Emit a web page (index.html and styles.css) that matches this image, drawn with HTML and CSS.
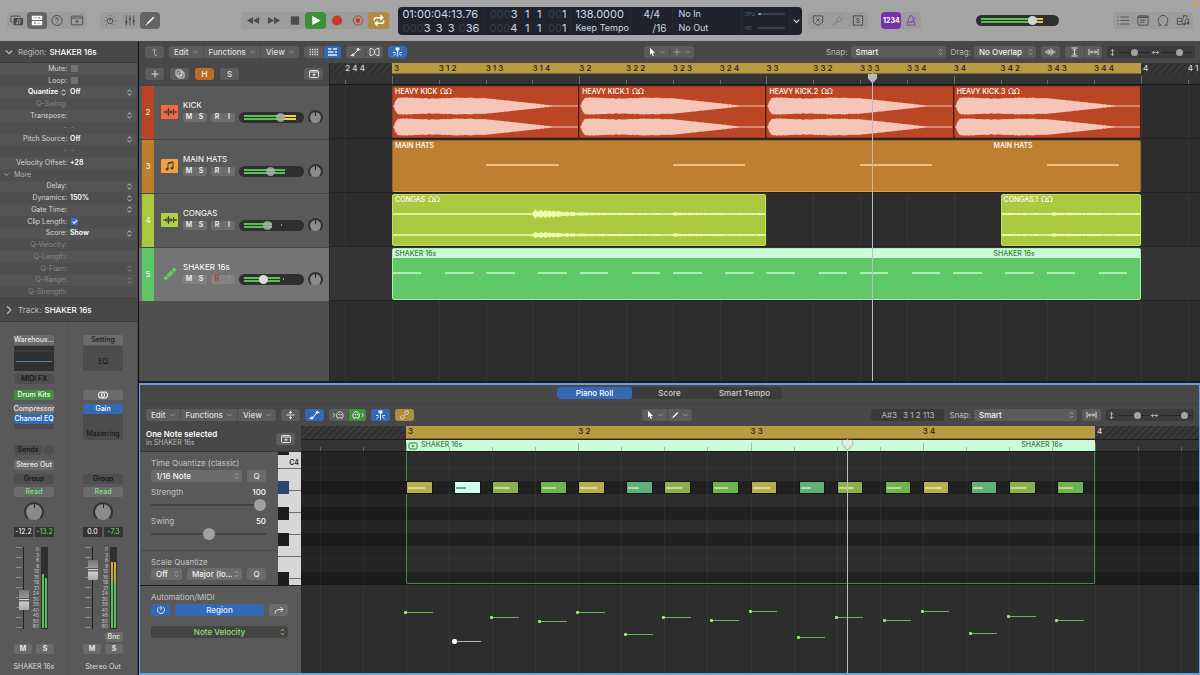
FILE: index.html
```html
<!DOCTYPE html>
<html lang="en">
<head>
    <meta charset="UTF-8">
    <meta name="viewport" content="width=device-width, initial-scale=1.0">
    <title>Logic Pro</title>
    <link rel="stylesheet" href="styles.css">
</head>
<body>
    <!-- icon set -->
    <svg class="sprite" width="0" height="0" aria-hidden="true">
        <symbol id="i-down" viewBox="0 0 8 8"><path d="M1.5 2.8 4 5.3l2.5-2.5"/></symbol>
        <symbol id="i-right" viewBox="0 0 8 8"><path d="M2.5 1 5.5 4l-3 3"/></symbol>
        <symbol id="i-updown" viewBox="0 0 8 10"><path d="M2 4l2-2.2L6 4M2 6l2 2.2L6 6"/></symbol>
        <symbol id="i-library" viewBox="0 0 16 14"><path d="M3 9H2.2A1.2 1.2 0 0 1 1 7.8V3.2A1.2 1.2 0 0 1 2.2 2h8.600A1.2 1.2 0 0 1 12 3.2"/><rect class="fill" x="4" y="4" width="11" height="8.5" rx="1.2"/><path class="cut" d="M8.5 10.300V6.500l3-.7v3.700"/><circle class="cutfill" cx="7.8" cy="10.300" r="1"/><circle class="cutfill" cx="10.800" cy="9.600" r="1"/></symbol>
        <symbol id="i-inspector" viewBox="0 0 16 14"><rect class="fill" x="2" y="1.500" width="12" height="5" rx="1"/><rect class="fill" x="2" y="7.500" width="12" height="5" rx="1"/><path class="cut" d="M4 4h4M8 10h4"/><circle class="cutfill" cx="10.500" cy="4" r="1.300"/><circle class="cutfill" cx="5.500" cy="10" r="1.300"/></symbol>
        <symbol id="i-help" viewBox="0 0 14 14"><circle cx="7" cy="7" r="5.500"/><path d="M5.500 5.800c0-2 3-2 3 0 0 1-1.500 1-1.500 2.200M7 9.200v.9"/></symbol>
        <symbol id="i-tray" viewBox="0 0 16 14"><rect x="1.500" y="2" width="13" height="10" rx="1"/><path d="M1.500 4.200h13M8 6v4M6 8h4"/></symbol>
        <symbol id="i-dial" viewBox="0 0 14 14"><circle cx="7" cy="7.500" r="3"/><path d="M7 7.500V5M1 7.500h1.200M11.800 7.500H13M2.800 3.300l.8.8M11.200 3.300l-.8.800M7 1.300v1.200M2.800 11.700l.8-.8M11.200 11.700l-.8-.8"/></symbol>
        <symbol id="i-faders" viewBox="0 0 14 14"><path d="M3 1.500v11M7 1.500v11M11 1.500v11"/><rect class="fill" x="1.800" y="7.500" width="2.400" height="2.500"/><rect class="fill" x="5.800" y="4" width="2.400" height="2.500"/><rect class="fill" x="9.800" y="6.500" width="2.400" height="2.500"/></symbol>
        <symbol id="i-pencil" viewBox="0 0 14 14"><path class="thick" d="M4 10.500 11 3.500"/><path d="M2.500 12l1.200-.8"/></symbol>
        <symbol id="i-rewind" viewBox="0 0 16 14"><path class="fill" d="M8 3v8L1 7zM15 3v8L8 7z"/></symbol>
        <symbol id="i-forward" viewBox="0 0 16 14"><path class="fill" d="M1 3v8l7-4zM8 3v8l7-4z"/></symbol>
        <symbol id="i-stop" viewBox="0 0 14 14"><rect class="fill" x="2.500" y="2.500" width="9" height="9"/></symbol>
        <symbol id="i-play" viewBox="0 0 14 14"><path class="fill" d="M3 2.200 12 7l-9 4.800z"/></symbol>
        <symbol id="i-record" viewBox="0 0 14 14"><circle class="fill" cx="7" cy="7" r="5.500"/></symbol>
        <symbol id="i-capture" viewBox="0 0 14 14"><circle cx="7" cy="7" r="5"/><circle class="fill" cx="7" cy="7" r="2.400"/></symbol>
        <symbol id="i-cycle" viewBox="0 0 14 14"><path class="thick" d="M2 7V5.500Q2 4 3.500 4H11M8.500 1.500 11 4 8.500 6.500M12 7v1.500q0 1.500-1.500 1.500H3M5.500 7.500 3 10l2.500 2.500"/></symbol>
        <symbol id="i-badge-x" viewBox="0 0 14 14"><path d="M2 2h10v7l-5 3.500L2 9zM5.300 4.800l3.400 3.400M8.700 4.800 5.300 8.200"/></symbol>
        <symbol id="i-fork" viewBox="0 0 14 14"><path d="M1.500 12.500 6 8M6 8 5.500 6 10 1.500M6 8l2 .5L12.500 4"/></symbol>
        <symbol id="i-solo" viewBox="0 0 14 14"><rect x="2" y="2" width="10" height="10"/><path d="M8.600 5.300c-.6-1-3.200-.7-3.200.5 0 1.400 3.200.9 3.200 2.400 0 1.200-2.800 1.400-3.400.3"/></symbol>
        <symbol id="i-metro" viewBox="0 0 14 14"><path d="M5.500 2h3L11.500 12h-9zM3.500 8.800h7M7 8.800l5-5.500"/></symbol>
        <symbol id="i-list" viewBox="0 0 16 14"><path d="M5 3h10M5 7h10M5 11h10M1.500 3h1.500M1.500 7h1.500M1.500 11h1.500"/></symbol>
        <symbol id="i-note" viewBox="0 0 14 14"><rect x="1.500" y="2" width="11" height="10" rx="1"/><path class="thick" d="M1.500 3.500h11"/><path d="M4 6.500h6M4 8.800h4.500"/></symbol>
        <symbol id="i-loop" viewBox="0 0 14 14"><path d="M1.500 12h3.500C-.5 8.500 2 1.500 7 1.500S14.500 8.500 9 12h3.500"/></symbol>
        <symbol id="i-media" viewBox="0 0 16 14"><path d="M1.500 4.500h5.500v7H1.500zM1.500 8h5.500M8.500 4.500V1.500h4v3"/><path d="M10.500 11V6.500l4-1V10"/><circle class="fill" cx="9.500" cy="11" r="1.400"/><circle class="fill" cx="13.500" cy="10.200" r="1.400"/></symbol>
        <symbol id="i-up" viewBox="0 0 12 10"><path d="M8.500 8.500h-1Q6 8.500 6 7V2M4 4l2-2.200L8 4"/></symbol>
        <symbol id="i-grid" viewBox="0 0 12 10"><path class="dots" d="M2 2.500h9M2 5h9M2 7.500h9"/></symbol>
        <symbol id="i-lanes" viewBox="0 0 12 10"><path class="thick" d="M1.500 2h3.500M6.500 2h4M1.500 5h5.500M8.500 5h2M1.500 8h9"/></symbol>
        <symbol id="i-auto" viewBox="0 0 12 10"><path d="M1 8.500h2.500l5-6H11"/><circle class="fill" cx="3.500" cy="8" r="1.400"/><circle class="fill" cx="8.500" cy="2.500" r="1.400"/></symbol>
        <symbol id="i-flex" viewBox="0 0 12 10"><path d="M1.500 1.500q4.500 0 4.500 3.500T1.500 8.500zM10.500 1.500Q6 1.500 6 5t4.500 3.500z"/></symbol>
        <symbol id="i-catch" viewBox="0 0 12 10"><path class="fill" d="M4 .5h4v2L6 4.500 4 2.500z"/><path d="M6 2v7.500M1.500 5.500h2.500M8 5.500h2.500M4.500 6.500 2 8.800M7.500 6.500 10 8.800"/></symbol>
        <symbol id="i-cursor" viewBox="0 0 10 10"><path class="fill" d="M3 .8v7l1.600-1.500 1.200 2.700 1.200-.5-1.200-2.600H8z"/></symbol>
        <symbol id="i-plus" viewBox="0 0 10 10"><path d="M5 1.500v7M1.500 5h7"/></symbol>
        <symbol id="i-copy" viewBox="0 0 12 10"><rect x="2" y="1" width="6" height="6" rx="1"/><rect x="4" y="3" width="6" height="6" rx="1"/><path d="M7 4.500v3M5.500 6h3"/></symbol>
        <symbol id="i-tray-up" viewBox="0 0 12 10"><rect x="1.500" y="1.500" width="9" height="7" rx="1"/><path d="M1.500 3h9M6 4.300v2.900M4.500 5.700h3"/></symbol>
        <symbol id="i-wave" viewBox="0 0 14 10"><path d="M1.500 4.500v1M3 3.500v3M4.500 2v6M6 3v4M7.500 1v8M9 2.500v5M10.500 3.500v3M12 4.500v1"/></symbol>
        <symbol id="i-track-wave" viewBox="0 0 14 10"><path d="M0 5h14M2.500 4v2M4 2.500v5M5.500 1v8M7 3v4M8.500 3.800v2.400M10.500 2v6M12 4v2"/></symbol>
        <symbol id="i-fit-v" viewBox="0 0 12 10"><path d="M3 1h6M3 9h6M6 2v6M4.500 3.500 6 2l1.500 1.500M4.500 6.500 6 8l1.500-1.500"/></symbol>
        <symbol id="i-fit-h" viewBox="0 0 12 10"><path d="M1.500 2v6M10.500 2v6M3 5h6M4.500 3.500 3 5l1.500 1.500M7.500 3.500 9 5 7.500 6.500"/></symbol>
        <symbol id="i-zoom-v" viewBox="0 0 10 10"><path d="M5 1.500v7M3 3.500l2-2 2 2M3 6.500l2 2 2-2"/></symbol>
        <symbol id="i-zoom-h" viewBox="0 0 10 10"><path d="M1.500 5h7M3.500 3l-2 2 2 2M6.500 3l2 2-2 2"/></symbol>
        <symbol id="i-collapse" viewBox="0 0 12 10"><path d="M2 5h8M6 .5V3M4.500 2 6 3.500 7.500 2M6 9.500V7M4.500 8 6 6.500 7.500 8"/></symbol>
        <symbol id="i-midi-in" viewBox="0 0 14 10"><path d="M1 3l2 2-2 2M6 8.500C3.500 5 6 1.500 8.500 1.500S13.500 5 11 8.500H9.500q0-1-1-1t-1 1z"/><path class="dots" d="M7 4.500h4"/></symbol>
        <symbol id="i-midi-out" viewBox="0 0 14 10"><path d="M11.500 3l2 2-2 2M3 8.500C.5 5 3 1.500 5.500 1.500S10.500 5 8 8.500H6.500q0-1-1-1t-1 1z"/><path class="dots" d="M4 4.500h4"/></symbol>
        <symbol id="i-link" viewBox="0 0 12 10"><path d="M5 6.500 7.500 3.500M5.500 3 7.500 1q1-.7 2 .2t.2 2L8 5M6.500 7l-2 2q-1 .7-2-.2t-.2-2L4 5"/></symbol>
        <symbol id="i-power" viewBox="0 0 12 10"><path d="M6 1v4M3.800 2.200a3.500 3.500 0 1 0 4.400 0"/></symbol>
        <symbol id="i-jump" viewBox="0 0 12 10"><path d="M2 8.500q0-4 4-4h4M7.500 2 10 4.500 7.500 7"/></symbol>
        <symbol id="i-stereo" viewBox="0 0 12 10"><circle cx="4.700" cy="5" r="2.600"/><circle cx="7.300" cy="5" r="2.600"/></symbol>
        <symbol id="i-loops" viewBox="0 0 12 8"><path d="M.5 6.500h1.700C-.2 4 1 1.500 3 1.500S6.200 4 4 6.500h4C5.800 4 7 1.500 9 1.500s3 2.500.8 5h1.700"/></symbol>
        <symbol id="i-region" viewBox="0 0 10 8"><rect x="1" y="1" width="8" height="6" rx="1"/><path class="fill" d="M4 2.500 6.500 4 4 5.500z"/></symbol>
        <symbol id="i-shaker" viewBox="0 0 16 16"><path class="tube" d="M2.500 13.500 13.500 2.500"/><path class="tube-cut" d="M4.500 9.500l2 2M9.500 4.500l2 2"/></symbol>
        <symbol id="i-notes" viewBox="0 0 14 12"><path d="M5 9V3l5-1v6"/><path class="thick" d="M5 3.300l5-1"/><circle class="fill" cx="4" cy="9" r="1.500"/><circle class="fill" cx="9" cy="8" r="1.500"/></symbol>
        <symbol id="i-playhead" viewBox="0 0 12 12"><path class="fill" d="M1 1h10v5L6 11.500 1 6z"/></symbol>
    </svg>

    <header class="control-bar">
        <div class="bar-group">
            <button aria-label="Library"><svg><use href="#i-library"/></svg></button>
            <button class="on-dark" aria-label="Inspector"><svg><use href="#i-inspector"/></svg></button>
            <button aria-label="Quick Help"><svg><use href="#i-help"/></svg></button>
            <button aria-label="Toolbar"><svg><use href="#i-tray"/></svg></button>
        </div>
        <div class="bar-group">
            <button aria-label="Smart Controls"><svg><use href="#i-dial"/></svg></button>
            <button aria-label="Mixer"><svg><use href="#i-faders"/></svg></button>
            <button class="on-dark" aria-label="Editors"><svg><use href="#i-pencil"/></svg></button>
        </div>
        <div class="space-3"></div>
        <div class="bar-group transport">
            <button aria-label="Rewind"><svg><use href="#i-rewind"/></svg></button>
            <button aria-label="Forward"><svg><use href="#i-forward"/></svg></button>
            <button aria-label="Stop"><svg><use href="#i-stop"/></svg></button>
            <button class="play" aria-label="Play"><svg><use href="#i-play"/></svg></button>
            <button class="red" aria-label="Record"><svg><use href="#i-record"/></svg></button>
            <button class="red" aria-label="Capture"><svg><use href="#i-capture"/></svg></button>
            <button class="gold" aria-label="Cycle"><svg><use href="#i-cycle"/></svg></button>
        </div>
        <div class="lcd">
            <div class="lcd-cell">
                <div class="lcd-time">01:00:04:13.76</div>
                <div class="lcd-pos"><span><i>000</i>3</span><span>3</span><span>3</span><span><i>0</i>36</span></div>
            </div>
            <div class="lcd-cell">
                <div class="lcd-pos"><span><i>000</i>3</span><span>1</span><span>1</span><span><i>00</i>1</span></div>
                <div class="lcd-pos"><span><i>000</i>4</span><span>1</span><span>1</span><span><i>00</i>1</span></div>
            </div>
            <div class="lcd-cell tempo">
                <div>138.0000</div>
                <div class="small">Keep Tempo</div>
            </div>
            <div class="lcd-cell sig">
                <div>4/4</div>
                <div class="division">/16</div>
            </div>
            <div class="lcd-cell io">
                <div class="small">No In</div>
                <div class="small">No Out</div>
            </div>
            <div class="lcd-cell load">
                <div>CPU <span class="load-bar"><b></b></span></div>
                <div>HD <span class="load-bar"></span></div>
            </div>
            <button class="lcd-menu" aria-label="Display mode"><svg><use href="#i-down"/></svg></button>
        </div>
        <div class="bar-group after-lcd">
            <button aria-label="Replace"><svg><use href="#i-badge-x"/></svg></button>
            <button class="faded" aria-label="Tuner"><svg><use href="#i-fork"/></svg></button>
            <button aria-label="Solo"><svg><use href="#i-solo"/></svg></button>
        </div>
        <div class="bar-group count">
            <button class="purple">1234</button>
            <button class="metro" aria-label="Metronome"><svg><use href="#i-metro"/></svg></button>
        </div>
        <div class="space-2"></div>
        <div class="volume master">
            <span class="level" style="width: 85%"></span>
            <input type="range" aria-label="Master volume" value="70">
        </div>
        <div class="space-2"></div>
        <div class="bar-group">
            <button aria-label="List editors"><svg><use href="#i-list"/></svg></button>
            <button aria-label="Note pad"><svg><use href="#i-note"/></svg></button>
            <button aria-label="Loop browser"><svg><use href="#i-loop"/></svg></button>
            <button aria-label="Browsers"><svg><use href="#i-media"/></svg></button>
        </div>
        <span class="mic-dot"></span>
    </header>

    <div class="workspace">
        <aside class="inspector">
            <h2><svg><use href="#i-down"/></svg>Region: <b>SHAKER 16s</b></h2>
            <div class="params">
                <div class="param"><label for="p-mute">Mute:</label><input type="checkbox" id="p-mute"></div>
                <div class="param"><label for="p-loop">Loop:</label><input type="checkbox" id="p-loop"></div>
                <div class="param strong"><label for="p-quant">Quantize <svg><use href="#i-updown"/></svg></label><select id="p-quant"><option>Off</option></select><svg><use href="#i-updown"/></svg></div>
                <div class="param off"><label for="p-swing">Q-Swing:</label><select id="p-swing" disabled></select></div>
                <div class="param"><label for="p-trans">Transpose:</label><select id="p-trans"></select><svg><use href="#i-updown"/></svg></div>
                <div class="param off dashes"><span>-</span><span>-</span></div>
                <div class="param"><label for="p-pitch">Pitch Source:</label><select id="p-pitch"><option>Off</option></select><svg><use href="#i-updown"/></svg></div>
                <div class="param off dashes"><span>-</span><span>-</span></div>
                <div class="param"><label for="p-vel">Velocity Offset:</label><input type="text" id="p-vel" value="+28"></div>
                <div class="param more"><svg><use href="#i-down"/></svg>More</div>
                <div class="param"><label for="p-delay">Delay:</label><select id="p-delay"></select><svg><use href="#i-updown"/></svg></div>
                <div class="param"><label for="p-dyn">Dynamics:</label><select id="p-dyn"><option>150%</option></select><svg><use href="#i-updown"/></svg></div>
                <div class="param"><label for="p-gate">Gate Time:</label><select id="p-gate"></select><svg><use href="#i-updown"/></svg></div>
                <div class="param"><label for="p-clip">Clip Length:</label><input type="checkbox" id="p-clip" checked></div>
                <div class="param"><label for="p-score">Score:</label><select id="p-score"><option>Show</option></select><svg><use href="#i-updown"/></svg></div>
                <div class="param off"><label for="p-qvel">Q-Velocity:</label><select id="p-qvel" disabled></select></div>
                <div class="param off"><label for="p-qlen">Q-Length:</label><select id="p-qlen" disabled></select></div>
                <div class="param off"><label for="p-qflam">Q-Flam:</label><select id="p-qflam" disabled></select><svg><use href="#i-updown"/></svg></div>
                <div class="param off"><label for="p-qrange">Q-Range:</label><select id="p-qrange" disabled></select><svg><use href="#i-updown"/></svg></div>
                <div class="param off"><label for="p-qstr">Q-Strength:</label><select id="p-qstr" disabled></select></div>
            </div>
            <h2 class="track-title"><svg><use href="#i-right"/></svg>Track: <b>SHAKER 16s</b></h2>

            <div class="strips">
                <section class="strip">
                    <button class="s-setting">Warehous...</button>
                    <div class="s-eq has-curve"><svg viewBox="0 0 40 25" preserveAspectRatio="none"><path d="M0 5h40" class="eq-bar"/><path d="M2 15.500h36" class="eq-line"/></svg></div>
                    <button class="s-midi flat">MIDI FX</button>
                    <button class="s-inst green">Drum Kits</button>
                    <div class="s-inserts short">
                        <button>Compressor</button>
                        <button class="blue">Channel EQ</button>
                    </div>
                    <div class="s-sends"><button class="flat">Sends</button><span class="send-knob"></span></div>
                    <button class="s-out">Stereo Out</button>
                    <button class="s-group flat">Group</button>
                    <button class="s-read">Read</button>
                    <div class="s-pan knob"></div>
                    <div class="s-values"><span>-12.2</span><span class="peak">-13.2</span></div>
                    <div class="s-fader">
                        <div class="ticks"></div>
                        <input type="range" class="fader" aria-label="Volume SHAKER 16s" value="31">
                        <div class="scale"></div>
                        <div class="meter"><span style="height: 67%"></span><span style="height: 63%"></span></div>
                    </div>
                    <div class="s-ms"><button>M</button><button>S</button></div>
                    <div class="s-name">SHAKER 16s</div>
                </section>
                <section class="strip">
                    <button class="s-setting dark-text">Setting</button>
                    <div class="s-eq">EQ</div>
                    <button class="s-inst" aria-label="Stereo"><svg><use href="#i-stereo"/></svg></button>
                    <div class="s-inserts">
                        <button class="blue">Gain</button>
                        <span>Mastering</span>
                    </div>
                    <button class="s-group flat">Group</button>
                    <button class="s-read">Read</button>
                    <div class="s-pan knob"></div>
                    <div class="s-values"><span>0.0</span><span class="peak">-7.3</span></div>
                    <div class="s-fader">
                        <div class="ticks"></div>
                        <input type="range" class="fader" aria-label="Volume Stereo Out" value="79">
                        <div class="scale"></div>
                        <div class="meter hot"><span style="height: 83%"></span><span style="height: 83%"></span></div>
                    </div>
                    <button class="s-bnc">Bnc</button>
                    <div class="s-ms"><button>M</button><button>S</button></div>
                    <div class="s-name">Stereo Out</div>
                </section>
            </div>
        </aside>

        <main class="stage">
            <section class="arrange">
                <div class="toolbar">
                    <div class="seg"><button class="icon faded" aria-label="Up"><svg><use href="#i-up"/></svg></button></div>
                    <div class="seg menus"><button>Edit<svg><use href="#i-down"/></svg></button><button>Functions<svg><use href="#i-down"/></svg></button><button>View<svg><use href="#i-down"/></svg></button></div>
                    <div class="seg"><button class="icon" aria-label="Grid"><svg><use href="#i-grid"/></svg></button><button class="icon blue" aria-label="Lanes"><svg><use href="#i-lanes"/></svg></button></div>
                    <div class="seg"><button class="icon" aria-label="Automation"><svg><use href="#i-auto"/></svg></button><button class="icon" aria-label="Flex"><svg><use href="#i-flex"/></svg></button></div>
                    <div class="seg"><button class="icon blue" aria-label="Catch"><svg><use href="#i-catch"/></svg></button></div>
                    <div class="space-13"></div>
                    <div class="seg tools"><button aria-label="Pointer tool"><svg class="white"><use href="#i-cursor"/></svg><svg><use href="#i-down"/></svg></button><button aria-label="Marquee tool"><svg><use href="#i-plus"/></svg><svg><use href="#i-down"/></svg></button></div>
                    <div class="space-7"></div>
                    <label for="snap-a">Snap:</label>
                    <div class="pick snap"><select id="snap-a"><option>Smart</option></select><svg><use href="#i-updown"/></svg></div>
                    <label for="drag-a">Drag:</label>
                    <div class="pick drag"><select id="drag-a"><option>No Overlap</option></select><svg><use href="#i-updown"/></svg></div>
                    <div class="seg"><button class="icon" aria-label="Waveform zoom"><svg><use href="#i-wave"/></svg></button></div>
                    <div class="seg"><button class="icon" aria-label="Fit height"><svg><use href="#i-fit-v"/></svg></button><button class="icon" aria-label="Fit width"><svg><use href="#i-fit-h"/></svg></button></div>
                    <div class="zooms">
                        <svg><use href="#i-zoom-v"/></svg><input type="range" aria-label="Vertical zoom" value="50">
                        <svg><use href="#i-zoom-h"/></svg><input type="range" aria-label="Horizontal zoom" value="60">
                    </div>
                </div>

                <div class="tracks-area">
                    <div class="track-headers">
                        <div class="header-tools">
                            <button class="mini" aria-label="New track"><svg><use href="#i-plus"/></svg></button>
                            <button class="mini" aria-label="Duplicate track"><svg><use href="#i-copy"/></svg></button>
                            <button class="mini orange">H</button>
                            <button class="mini">S</button>
                            <button class="mini last" aria-label="Track header settings"><svg><use href="#i-tray-up"/></svg></button>
                        </div>
                        <div class="track red-track">
                            <div class="number">2</div>
                            <div class="track-icon"><svg><use href="#i-track-wave"/></svg></div>
                            <div class="track-body">
                                <div class="track-name">KICK</div>
                                <div class="track-row">
                                    <div class="pair"><button>M</button><button>S</button></div>
                                    <div class="pair"><button>R</button><button>I</button></div>
                                    <div class="volume warm"><span class="level" style="width: 94%"></span><input type="range" aria-label="Volume KICK" value="66"></div>
                                    <div class="knob small-knob"></div>
                                </div>
                            </div>
                        </div>
                        <div class="track orange-track">
                            <div class="number">3</div>
                            <div class="track-icon"><svg><use href="#i-notes"/></svg></div>
                            <div class="track-body">
                                <div class="track-name">MAIN HATS</div>
                                <div class="track-row">
                                    <div class="pair"><button>M</button><button>S</button></div>
                                    <div class="pair"><button>R</button><button>I</button></div>
                                    <div class="volume"><span class="level" style="width: 74%"></span><input type="range" aria-label="Volume MAIN HATS" value="48"></div>
                                    <div class="knob small-knob"></div>
                                </div>
                            </div>
                        </div>
                        <div class="track lime-track">
                            <div class="number">4</div>
                            <div class="track-icon"><svg><use href="#i-track-wave"/></svg></div>
                            <div class="track-body">
                                <div class="track-name">CONGAS</div>
                                <div class="track-row">
                                    <div class="pair"><button>M</button><button>S</button></div>
                                    <div class="pair"><button>R</button><button>I</button></div>
                                    <div class="volume"><span class="level" style="width: 50%"></span><span class="hold" style="left: 64%"></span><input type="range" aria-label="Volume CONGAS" value="42"></div>
                                    <div class="knob small-knob"></div>
                                </div>
                            </div>
                        </div>
                        <div class="track green-track selected">
                            <div class="number">5</div>
                            <div class="track-icon plain"><svg><use href="#i-shaker"/></svg></div>
                            <div class="track-body">
                                <div class="track-name">SHAKER 16s</div>
                                <div class="track-row">
                                    <div class="pair"><button>M</button><button>S</button></div>
                                    <div class="pair"><button class="rec">R</button><button class="inp">I</button></div>
                                    <div class="volume"><span class="level" style="width: 66%"></span><span class="hold" style="left: 67%"></span><input type="range" aria-label="Volume SHAKER 16s" value="35"></div>
                                    <div class="knob small-knob"></div>
                                </div>
                            </div>
                        </div>
                    </div>

                    <div class="timeline" id="timeline">
                        <div class="ruler">
                            <div class="cycle"></div>
                        </div>
                        <div class="tick-row"></div>
                        <div class="lane">
                            <div class="region kick" style="--at: 0; --len: 4"><span>HEAVY KICK <svg><use href="#i-loops"/></svg></span></div>
                            <div class="region kick" style="--at: 4; --len: 4"><span>HEAVY KICK.1 <svg><use href="#i-loops"/></svg></span></div>
                            <div class="region kick" style="--at: 8; --len: 4"><span>HEAVY KICK.2 <svg><use href="#i-loops"/></svg></span></div>
                            <div class="region kick" style="--at: 12; --len: 4"><span>HEAVY KICK.3 <svg><use href="#i-loops"/></svg></span></div>
                        </div>
                        <div class="lane">
                            <div class="region hats" style="--at: 0; --len: 16"><span>MAIN HATS</span><span class="repeat">MAIN HATS</span></div>
                        </div>
                        <div class="lane">
                            <div class="region congas" data-from="0" data-to="8" style="--at: 0; --len: 8"><span>CONGAS <svg><use href="#i-loops"/></svg></span></div>
                            <div class="region congas" data-from="4" data-to="7" style="--at: 13; --len: 3"><span>CONGAS.1 <svg><use href="#i-loops"/></svg></span></div>
                        </div>
                        <div class="lane current">
                            <div class="region shaker" style="--at: 0; --len: 16"><span>SHAKER 16s</span><span class="repeat">SHAKER 16s</span></div>
                        </div>
                        <div class="playhead"><svg><use href="#i-playhead"/></svg></div>
                    </div>
                </div>
            </section>

            <section class="editor">
                <div class="tabs">
                    <div class="tab-set"><button class="active">Piano Roll</button><button>Score</button><button>Smart Tempo</button></div>
                </div>
                <div class="toolbar">
                    <div class="seg menus"><button>Edit<svg><use href="#i-down"/></svg></button><button>Functions<svg><use href="#i-down"/></svg></button><button>View<svg><use href="#i-down"/></svg></button></div>
                    <div class="seg"><button class="icon" aria-label="Collapse"><svg><use href="#i-collapse"/></svg></button></div>
                    <div class="seg"><button class="icon blue" aria-label="Automation"><svg><use href="#i-auto"/></svg></button></div>
                    <div class="seg"><button class="icon" aria-label="MIDI In"><svg><use href="#i-midi-in"/></svg></button><button class="icon green" aria-label="MIDI Out"><svg><use href="#i-midi-out"/></svg></button></div>
                    <div class="seg"><button class="icon blue" aria-label="Catch"><svg><use href="#i-catch"/></svg></button></div>
                    <div class="seg"><button class="icon gold" aria-label="Link"><svg><use href="#i-link"/></svg></button></div>
                    <div class="space-9"></div>
                    <div class="seg tools"><button aria-label="Pointer tool"><svg class="white"><use href="#i-cursor"/></svg><svg><use href="#i-down"/></svg></button><button aria-label="Pencil tool"><svg class="white"><use href="#i-pencil"/></svg><svg><use href="#i-down"/></svg></button></div>
                    <div class="space-7"></div>
                    <div class="info-box"><span>A#3</span><span>3 1 2 113</span></div>
                    <label for="snap-b">Snap:</label>
                    <div class="pick snap-wide"><select id="snap-b"><option>Smart</option></select><svg><use href="#i-updown"/></svg></div>
                    <div class="seg"><button class="icon" aria-label="Fit width"><svg><use href="#i-fit-h"/></svg></button></div>
                    <div class="zooms">
                        <svg><use href="#i-zoom-v"/></svg><input type="range" aria-label="Vertical zoom" value="70">
                        <svg><use href="#i-zoom-h"/></svg><input type="range" aria-label="Horizontal zoom" value="86">
                    </div>
                </div>

                <div class="editor-body">
                    <div class="editor-side">
                        <div class="selection">
                            <div><b>One Note selected</b><small>in SHAKER 16s</small></div>
                            <button class="mini" aria-label="Editor settings"><svg><use href="#i-tray-up"/></svg></button>
                        </div>
                        <div class="side-keys">
                            <div class="quantize">
                                <div class="q-block">
                                    <label for="tq">Time Quantize (classic)</label>
                                    <div class="q-row"><div class="pick grow"><select id="tq"><option>1/16 Note</option></select><svg><use href="#i-updown"/></svg></div><button class="mini">Q</button></div>
                                    <div class="q-label"><label for="strength">Strength</label><output>100</output></div>
                                    <input type="range" class="flat-range" id="strength" value="100">
                                    <div class="q-label"><label for="swing">Swing</label><output>50</output></div>
                                    <input type="range" class="flat-range" id="swing" value="50">
                                </div>
                                <div class="q-block scale-q">
                                    <label for="sq-scale">Scale Quantize</label>
                                    <div class="q-row"><div class="pick root"><select aria-label="Root"><option>Off</option></select><svg><use href="#i-updown"/></svg></div><div class="pick grow"><select id="sq-scale"><option>Major (lo...</option></select><svg><use href="#i-updown"/></svg></div><button class="mini">Q</button></div>
                                </div>
                            </div>
                            <div class="keys">
                                <div class="white-key top">C4</div>
                                <div class="white-key"></div>
                                <div class="white-key"></div>
                                <div class="white-key"></div>
                                <div class="white-key"></div>
                                <div class="white-key"></div>
                                <div class="white-key last"></div>
                                <div class="black-keys"></div>
                            </div>
                        </div>
                        <div class="automation">
                            <div>Automation/MIDI</div>
                            <div class="q-row"><button class="mini blue" aria-label="Automation on"><svg><use href="#i-power"/></svg></button><button class="mini blue grow">Region</button><button class="mini" aria-label="Jump"><svg><use href="#i-jump"/></svg></button></div>
                            <div class="pick velocity-pick"><select aria-label="Lane"><option>Note Velocity</option></select><svg><use href="#i-updown"/></svg></div>
                        </div>
                    </div>
                    <div class="roll" id="roll">
                        <div class="ruler">
                            <div class="cycle"></div>
                        </div>
                        <div class="tick-row">
                            <div class="roll-region"><svg><use href="#i-region"/></svg><span>SHAKER 16s</span><span class="repeat">SHAKER 16s</span></div>
                        </div>
                        <div class="note-grid"><div class="bounds"></div></div>
                        <div class="velocity-lane"></div>
                        <div class="playhead"><svg><use href="#i-playhead"/></svg></div>
                    </div>
                </div>
            </section>
        </main>
    </div>

    <script src="script.js"></script>
</body>
</html>
```

FILE: styles.css
```css
* {
    margin: 0;
    padding: 0;
    box-sizing: border-box;
}

body {
    height: 100vh;
    display: flex;
    flex-direction: column;
    overflow: hidden;
    background: #1b1b1b;
    color: #dedede;
    font-family: Inter, "Liberation Sans", sans-serif;
    font-size: 8px;
    line-height: 10px;
}

button,
select,
input,
output {
    font: inherit;
    color: inherit;
    border: none;
    background: none;
    outline: none;
}

button {
    display: flex;
    align-items: center;
    justify-content: center;
    white-space: nowrap;
}

select {
    appearance: none;
}

svg {
    width: 14px;
    height: 12px;
    fill: none;
    stroke: currentColor;
    stroke-width: 1;
    flex: none;
}

.sprite {
    position: absolute;
}

.fill {
    fill: currentColor;
    stroke: none;
}

.cut {
    stroke: #a2a2a2;
}

.cutfill {
    fill: #a2a2a2;
    stroke: none;
}

.thick {
    stroke-width: 1.6;
}

.dots {
    stroke-width: 1.4;
    stroke-dasharray: 1.4 1;
}

.tube {
    stroke: #55d364;
    stroke-width: 3.5;
}

.tube-cut {
    stroke: #747474;
}

input[type="range"] {
    appearance: none;
    display: block;
    width: 100%;
    height: 12px;
}

.white {
    color: #fff;
}

.grow {
    flex: 1;
}

.space-2 { flex: 2; }
.space-3 { flex: 3; }
.space-7 { flex: 7; }
.space-9 { flex: 9; }
.space-13 { flex: 13; }

/* control bar */
.control-bar {
    position: relative;
    display: flex;
    align-items: center;
    height: 41px;
    padding: 0 7px;
    background: #a5a5a5;
    color: #4c4c4c;
    flex: none;
}

.bar-group {
    display: flex;
    height: 17px;
    border-radius: 4px;
    background: #9c9c9c;
}

.bar-group + .bar-group {
    margin-left: 13px;
}

.bar-group button {
    width: 20px;
    height: 17px;
    border-radius: 4px;
}

.bar-group svg {
    width: 14px;
    height: 13px;
}

.transport {
    padding: 0 1px;
}

.transport button {
    width: 21px;
}

.on-dark {
    background: #646464;
    color: #fff;
}

.on-dark .cut {
    stroke: #646464;
}

.bar-group .play {
    background: #3f8f3a;
    color: #fff;
}

.red {
    color: #c63a30;
}

.gold {
    background: #b08c3d;
    color: #fff;
}

.faded {
    opacity: 0.5;
}

.bar-group.after-lcd {
    margin-left: 6px;
}

.bar-group .purple {
    background: #7333a8;
    color: #fff;
    font-weight: 700;
    font-size: 7px;
}

.metro {
    color: #7f45b0;
}

.mic-dot {
    position: absolute;
    top: 3px;
    right: 3px;
    width: 4px;
    height: 4px;
    border-radius: 50%;
    background: #e39a36;
}

.lcd {
    display: flex;
    height: 28px;
    margin-left: 8px;
    padding-left: 3px;
    border-radius: 4px;
    background: #20232d;
    color: #cfd8e6;
    font-size: 11px;
    line-height: 14px;
}

.lcd-cell {
    width: 86px;
    padding-left: 4px;
    border-right: 1px solid #282b35;
    white-space: nowrap;
}

.lcd-cell:first-child {
    width: 84px;
    padding-left: 1px;
}

.lcd-pos {
    display: grid;
    grid-template-columns: 28px 12px 12px 25px;
    text-align: right;
}

.lcd-pos i {
    color: #393d48;
    font-style: normal;
}

.lcd-cell .small {
    font-size: 9px;
}

.lcd-cell.tempo {
    width: 60px;
}

.lcd-cell.sig {
    width: 42px;
    padding: 0 6px 0 12px;
    font-size: 10px;
}

.division {
    text-align: right;
}

.lcd-cell.io {
    width: 69px;
    padding-left: 5px;
}

.lcd-cell.load {
    width: 48px;
    padding: 0 4px 0 2px;
    color: #5c6270;
    font-size: 5px;
}

.load > div {
    display: flex;
    align-items: center;
    justify-content: space-between;
    height: 14px;
}

.load-bar {
    width: 27px;
    height: 2px;
    background: #3b404c;
}

.load-bar b {
    display: block;
    width: 3px;
    height: 2px;
    background: #7f93ad;
}

.lcd-menu {
    width: 12px;
}

.lcd-menu svg {
    width: 9px;
}

/* volume sliders with level meters */
.volume {
    position: relative;
    width: 65px;
    height: 11px;
    padding: 0 5px;
    border-radius: 6px;
    background: #2f2f2f;
}

.volume.master {
    width: 83px;
}

.level {
    display: block;
    height: 11px;
    background: linear-gradient(#0000 3px, #58c055 3px 5px, #0000 5px 6px, #58c055 6px 8px, #0000 8px);
}

.warm .level,
.master .level {
    background: linear-gradient(#2f2f2f 3px, #0000 3px 5px, #2f2f2f 5px 6px, #0000 6px 8px, #2f2f2f 8px), linear-gradient(90deg, #58c055 72%, #e8d84a 78%);
}

.master .level {
    background: linear-gradient(#2f2f2f 3px, #0000 3px 5px, #2f2f2f 5px 6px, #0000 6px 8px, #2f2f2f 8px), linear-gradient(90deg, #58c055 85%, #e0c54a 90%);
}

.hold {
    position: absolute;
    top: 4px;
    width: 1px;
    height: 2px;
    background: #58c055;
}

.volume input {
    position: absolute;
    inset: 0;
    height: 11px;
}

.volume input::-webkit-slider-thumb {
    appearance: none;
    width: 9px;
    height: 9px;
    border-radius: 50%;
    background: #b0b0b0cc;
}

.volume.master input::-webkit-slider-thumb {
    background: #d4d4d4;
}

/* inspector */
.workspace {
    flex: 1;
    display: flex;
    min-height: 0;
}

.inspector {
    width: 138px;
    flex: none;
    display: flex;
    flex-direction: column;
    background: #545454;
    border-right: 1px solid #484848;
}

.inspector h2 {
    display: flex;
    align-items: center;
    gap: 3px;
    height: 22px;
    padding-left: 4px;
    background: #484848;
    border-bottom: 1px solid #3a3a3a;
    color: #b9b9b9;
    font-size: 8px;
    font-weight: 400;
}

.inspector h2 svg {
    width: 10px;
    height: 10px;
    margin-right: 1px;
}

.inspector h2 b {
    color: #fff;
    font-weight: 500;
}

.inspector .track-title {
    height: 24px;
    border-top: 1px solid #3f3f3f;
}

.params {
    display: grid;
    grid-auto-rows: 1fr;
    height: 235px;
    font-size: 7px;
}

.param {
    display: grid;
    grid-template-columns: 67px 1fr 8px;
    align-items: center;
    padding-right: 3px;
    color: #d4d4d4;
}

.param:nth-child(even) {
    background: #4f4f4f;
}

.param label {
    text-align: right;
}

.param svg {
    width: 7px;
    height: 9px;
    vertical-align: middle;
}

.param select,
.param input[type="text"] {
    min-width: 0;
    width: 100%;
    padding-left: 3px;
    color: #fff;
    font-weight: 600;
    line-height: 10px;
}

.param.strong label {
    color: #fff;
    font-weight: 600;
}

.param.off {
    color: #868686;
}

.param input[type="checkbox"] {
    appearance: none;
    width: 7px;
    height: 7px;
    margin-left: 4px;
    border-radius: 1px;
    background: #737373;
}

.param input[type="checkbox"]:checked {
    background: #2f6fd0;
    color: #fff;
}

.param input[type="checkbox"]:checked::after {
    content: "✓";
    display: block;
    font-size: 7px;
    font-weight: 700;
    line-height: 7px;
    text-align: center;
}

.param.dashes {
    grid-template-columns: 67px 1fr;
}

.dashes span:first-child {
    text-align: right;
}

.dashes span:last-child {
    padding-left: 4px;
}

.param.more {
    display: flex;
    gap: 4px;
    padding-left: 3px;
    color: #b5b5b5;
}

/* channel strips */
.strips {
    flex: 1;
    display: flex;
    background: #595959;
}

.strip {
    flex: 1;
    display: grid;
    grid-template-columns: 40px;
    grid-template-rows: 11px 28px 16px 14px 41px 15px 14px 13px 15px 25px 20px 85px 12px 14px 14px;
    justify-content: center;
    align-items: start;
    padding-top: 13px;
    font-size: 7px;
    text-align: center;
    white-space: nowrap;
}

.strip + .strip {
    border-left: 1px solid #505050;
}

.strip button {
    width: 100%;
    height: 10px;
    border-radius: 2px;
    background: #6b6b6b;
    color: #e8e8e8;
    font-weight: 500;
}

.strip .flat {
    background: #4f4f4f;
    color: #111;
}

.strip .dark-text {
    color: #1c1c1c;
}

.strip .green,
.seg .green {
    background: #3f8f3f;
    color: #fff;
}

.strip .blue {
    background: #3568b5;
    color: #fff;
}

.strip .s-setting { grid-row: 1; }

.s-eq {
    grid-row: 2;
    height: 25px;
    background: #4c4c4c;
    color: #111;
    line-height: 32px;
}

.s-eq.has-curve {
    background: #303030;
}

.s-eq svg {
    display: block;
    width: 100%;
    height: 100%;
}

.eq-bar {
    stroke: #484848;
}

.eq-line {
    stroke: #5b80b8;
}

.strip .s-midi { grid-row: 3; }
.strip .s-inst { grid-row: 4; }

.s-inserts {
    grid-row: 5;
    height: 36px;
    border-radius: 2px;
    background: #4c4c4c;
    color: #111;
}

.s-inserts.short {
    height: 25px;
}

.s-inserts span {
    display: block;
    padding-top: 15px;
}

.s-sends {
    grid-row: 6;
    display: flex;
    gap: 2px;
}

.send-knob {
    flex: none;
    width: 10px;
    height: 10px;
    border-radius: 50%;
    background: #4f4f4f;
}

.strip .s-out { grid-row: 7; }
.strip .s-group { grid-row: 8; }

.strip .s-read {
    grid-row: 9;
    color: #7be07d;
}

.knob {
    width: 20px;
    height: 20px;
    border: 2px solid #333;
    border-bottom-color: #0000;
    border-radius: 50%;
    background: linear-gradient(#222, #222) center 0 / 1px 4px no-repeat padding-box, #8b8b8b padding-box;
}

.s-pan {
    grid-row: 10;
    justify-self: center;
}

.s-values {
    grid-row: 11;
    display: flex;
    gap: 2px;
    color: #fff;
}

.s-values span {
    flex: 1;
    background: #343434;
}

.s-values .peak {
    color: #6fd672;
}

.s-fader {
    grid-row: 12;
    display: flex;
    height: 82px;
}

.ticks {
    width: 6px;
    margin-left: 2px;
    background: repeating-linear-gradient(#8c8c8c 0 1px, #0000 1px 10px);
}

.s-fader .fader {
    writing-mode: vertical-lr;
    direction: rtl;
    width: 11px;
    height: 82px;
    margin-left: -4px;
    background: linear-gradient(#222, #222) center / 1px 100% no-repeat;
}

.fader::-webkit-slider-thumb {
    appearance: none;
    width: 10px;
    height: 20px;
    border-radius: 1px;
    background: linear-gradient(#777, #999 8px, #555 8px 9px, #d8d8d8 9px 10px, #666 10px 11px, #ccc 12px, #aaa);
}

.scale {
    display: flex;
    flex-direction: column;
    justify-content: space-between;
    width: 10px;
    color: #c4c4c4;
    font-size: 5px;
    line-height: 5px;
    text-align: right;
}

.meter {
    display: flex;
    align-items: flex-end;
    gap: 1px;
    width: 7px;
    height: 82px;
    margin-left: 2px;
    padding: 1px;
    background: #303030;
}

.meter span {
    width: 2px;
    background: #56c158;
}

.meter.hot span {
    background: linear-gradient(#e3a93a, #b3b044 14px, #56c158 26px);
}

.strip .s-bnc {
    grid-row: 13;
    width: 18px;
    justify-self: end;
}

.s-ms {
    grid-row: 14;
    display: flex;
    gap: 4px;
}

.s-ms button {
    font-weight: 700;
}

.s-name {
    grid-row: 15;
    padding-top: 4px;
    justify-self: center;
}

/* right side */
.stage {
    flex: 1;
    display: flex;
    flex-direction: column;
    min-width: 0;
    border-left: 1px solid #111;
}

.arrange {
    flex: 1;
    display: flex;
    flex-direction: column;
    min-height: 0;
    margin-bottom: 2px;
}

.toolbar {
    display: flex;
    align-items: center;
    gap: 5px;
    height: 22px;
    padding: 0 5px 0 6px;
    background: #484848;
    flex: none;
}

.toolbar label {
    margin-right: -2px;
    color: #b8b8b8;
}

.seg,
.tab-set {
    display: flex;
    border-radius: 3px;
    background: #5c5c5c;
    overflow: hidden;
}

.seg button {
    height: 12px;
    color: #dedede;
    font-weight: 500;
}

.seg button + button {
    border-left: 1px solid #4e4e4e;
}

.menus button {
    gap: 3px;
    padding: 0 4px 0 5px;
}

.menus svg,
.tools svg {
    width: 7px;
    height: 8px;
    color: #9a9a9a;
}

.seg .icon {
    width: 19px;
}

.seg .icon + .icon {
    width: 18px;
}

.icon svg {
    width: 13px;
    height: 10px;
}

.seg .blue,
.mini.blue {
    background: #3568b5;
    color: #e5efff;
}

.seg .gold {
    background: #b08c3d;
}

.tools button {
    width: 25px;
    gap: 2px;
}

.tools svg:first-child {
    width: 10px;
    height: 10px;
}

.tools .white {
    color: #fff;
}

.pick {
    position: relative;
    height: 12px;
    border-radius: 3px;
    background: #5c5c5c;
}

.pick select {
    display: block;
    width: 100%;
    height: 12px;
    padding: 0 10px 0 5px;
    color: #f2f2f2;
    font-weight: 500;
    line-height: 12px;
}

.pick svg {
    position: absolute;
    top: 1px;
    right: 2px;
    width: 7px;
    height: 10px;
    color: #a8a8a8;
    pointer-events: none;
}

.snap { width: 95px; }
.drag { width: 62px; }
.snap-wide { width: 103px; }
.root { width: 31px; }

.zooms {
    display: flex;
    align-items: center;
    width: 88px;
    height: 12px;
    padding: 0 3px 0 0;
    border-radius: 3px;
    background: #3b3b3b;
    color: #b5b5b5;
}

.zooms svg {
    width: 9px;
    height: 9px;
    margin: 0 2px 0 1px;
}

.zooms input {
    flex: 1;
    min-width: 0;
    background: linear-gradient(#252525, #252525) center / 100% 1px no-repeat;
}

.zooms input::-webkit-slider-thumb {
    appearance: none;
    width: 7px;
    height: 7px;
    border-radius: 50%;
    background: #a3a3a3;
}

/* track list */
.tracks-area {
    flex: 1;
    display: flex;
    min-height: 0;
}

.track-headers {
    width: 191px;
    flex: none;
    background: #4f4f4f;
    border-right: 1px solid #262626;
}

.header-tools {
    display: flex;
    align-items: center;
    gap: 6px;
    height: 22px;
    padding: 0 6px;
    background: #484848;
}

.mini {
    width: 19px;
    height: 12px;
    border-radius: 3px;
    background: #5d5d5d;
    color: #e2e2e2;
    font-weight: 500;
}

.mini.grow {
    width: auto;
}

.mini svg {
    width: 12px;
    height: 10px;
}

.mini.orange {
    background: #b86c28;
    color: #fff;
}

.mini.last {
    margin-left: auto;
}

.track {
    --tint: #b94524;
    --icon: #ee6b42;
    display: flex;
    align-items: center;
    height: 54px;
    padding-left: 3px;
    background: #595959;
    border-top: 1px solid #454545;
}

.orange-track {
    --tint: #bf7e2f;
    --icon: #f2a33c;
}

.lime-track {
    --tint: #aac93f;
    --icon: #add345;
}

.green-track {
    --tint: #5dc767;
    --icon: #5dc767;
}

.track.selected {
    background: #747474;
}

.number {
    width: 12px;
    height: 100%;
    background: var(--tint);
    color: #f6f6f6;
    line-height: 53px;
    text-align: center;
}

.track-icon {
    display: flex;
    align-items: center;
    justify-content: center;
    width: 17px;
    height: 14px;
    margin: 0 5px 2px 7px;
    border-radius: 1px;
    background: var(--icon);
    color: #4b3a2c;
}

.track-icon.plain {
    background: none;
}

.track-icon.plain svg {
    width: 16px;
    height: 16px;
}

.track-body {
    padding-bottom: 1px;
    color: #fff;
}

.track-name {
    line-height: 10px;
}

.track-row {
    display: flex;
    align-items: center;
    gap: 4px;
}

.pair {
    display: flex;
    border-radius: 2px;
    background: #6d6d6d;
}

.selected .pair {
    background: #828282;
}

.pair button {
    width: 12px;
    height: 9px;
    color: #f0f0f0;
    font-size: 7px;
    font-weight: 600;
}

.pair .rec {
    color: #b5342a;
}

.pair .inp {
    color: #b98a4f;
}

.small-knob {
    width: 15px;
    height: 15px;
}

.selected .volume input::-webkit-slider-thumb {
    background: #dcdcdc;
}

/* timelines: --at and --len are counted in sixteenth notes */
.timeline,
.roll {
    position: relative;
    flex: 1;
    display: flex;
    flex-direction: column;
    min-width: 0;
    overflow: hidden;
}

.timeline {
    --origin: 7.13%;
    --step: 5.38%;
    background: #2d2d2d;
}

.roll {
    --origin: 11.7%;
    --step: 4.795%;
    background: #2d2d2d;
}

.ruler,
.tick-row,
.lane,
.note-grid,
.velocity-lane {
    position: relative;
    flex: none;
}

.ruler {
    height: 11px;
    background: repeating-linear-gradient(135deg, #313131 0 3px, #3a3a3a 3px 5px);
    color: #d8d8d8;
}

.cycle {
    position: absolute;
    top: 0;
    bottom: 0;
    left: var(--origin);
    width: calc(var(--step) * 16);
    border-bottom: 1px solid #7d692c;
    background: #b89b42;
}

.ruler-label {
    position: absolute;
    top: 0;
    left: calc(var(--origin) + var(--step) * var(--at));
    font-weight: 500;
    white-space: nowrap;
}

.ruler-label.bar {
    padding-left: 2px;
}

.ruler-label.in-cycle {
    color: #1e1a0c;
}

.tick-row {
    height: 11px;
    background: #343434;
    border-bottom: 1px solid #181818;
}

.tick {
    position: absolute;
    bottom: 0;
    left: calc(var(--origin) + var(--step) * var(--at));
    width: 1px;
    height: 4px;
    background: #6a6a6a;
}

.tick.beat {
    height: 8px;
}

.gridline {
    position: absolute;
    top: 0;
    bottom: 0;
    left: calc(var(--origin) + var(--step) * var(--at));
    width: 1px;
    background: #ffffff0d;
}

.timeline > .gridline {
    top: 22px;
}

.lane {
    height: 54px;
    border-bottom: 1px solid #222;
}

.lane.current {
    background: #353535;
}

.region {
    position: absolute;
    top: 1px;
    bottom: 0;
    left: calc(var(--origin) + var(--step) * var(--at));
    width: calc(var(--step) * var(--len));
    border: 1px solid #0003;
    border-radius: 2px;
    overflow: hidden;
    color: #fff;
    font-size: 7px;
    font-weight: 500;
    line-height: 9px;
}

.region > span {
    position: absolute;
    left: 2px;
    white-space: nowrap;
}

.region > span svg {
    width: 12px;
    height: 8px;
    margin-left: 1px;
    vertical-align: top;
}

.region > .repeat {
    left: 80.4%;
}

.region.kick {
    background: #bb4625;
    border-right-color: #4a1c10;
}

.region.hats {
    background: #bf7f30;
    border-bottom-color: #dfa04a;
}

.region.congas {
    background: #aac940;
    border-color: #c5e05a;
}

.region.shaker {
    background: linear-gradient(#cbfcda 9px, #5fc868 9px);
    border-color: #a9f0b5;
    color: #357a44;
}

.region .wave {
    position: absolute;
    left: 0;
    width: 100%;
    height: 18px;
    stroke: none;
}

.wave.left { top: 10px; }
.wave.right { top: 31px; }

.kick .wave {
    fill: #f5c6b8;
}

.congas .wave {
    fill: #efffae;
}

.dash {
    position: absolute;
    top: 23px;
    left: calc(6.25% * var(--at));
    width: calc(6.25% * var(--len));
    height: 2px;
    background: #f3cf9bcc;
}

.shaker .dash {
    background: #c0f8c8cc;
}

.playhead {
    position: absolute;
    top: 10px;
    bottom: 0;
    left: calc(var(--origin) + var(--step) * 10.25);
    width: 1px;
    background: #bdbdbd;
    color: #b8b8b8;
}

.playhead svg {
    position: absolute;
    left: -5px;
    width: 11px;
    height: 11px;
}

/* editor */
.editor {
    display: flex;
    flex-direction: column;
    flex: none;
    border: 1px solid #6c9fdc;
    border-top-width: 2px;
    border-bottom-width: 2px;
    background: #484848;
}

.tabs {
    display: flex;
    justify-content: center;
    height: 19px;
    padding-top: 2px;
    border-bottom: 1px solid #424242;
}

.tab-set {
    height: 12px;
    background: #3c3c3c;
}

.tab-set button {
    width: 75px;
    height: 12px;
    border-radius: 3px;
    color: #cdcdcd;
    font-weight: 500;
}

.tab-set .active {
    background: #3568b5;
    color: #fff;
}

.info-box {
    display: flex;
    justify-content: center;
    gap: 6px;
    width: 73px;
    height: 12px;
    border-radius: 3px;
    background: #3b3b3b;
    color: #b8b8b8;
    line-height: 12px;
    white-space: nowrap;
}

.editor-body {
    display: flex;
}

.editor-side {
    width: 161px;
    flex: none;
    display: flex;
    flex-direction: column;
    background: #595959;
}

.selection {
    display: flex;
    align-items: center;
    justify-content: space-between;
    height: 26px;
    padding: 0 6px;
    background: #484848;
    border-bottom: 1px solid #383838;
}

.selection b {
    display: block;
    color: #fff;
    font-weight: 600;
    line-height: 9px;
}

.selection small {
    display: block;
    color: #b8b8b8;
    font-size: 7px;
    line-height: 8px;
}

.side-keys {
    display: flex;
    height: 133px;
}

.quantize {
    flex: 1;
    color: #c4c4c4;
}

.quantize .pick,
.quantize .mini,
.automation .mini {
    background: #6b6b6b;
}

.automation .mini.blue {
    background: #3568b5;
}

.q-block {
    padding: 6px 12px 0 11px;
    height: 98px;
}

.q-block.scale-q {
    height: 35px;
    border-top: 1px solid #4a4a4a;
}

.q-block label {
    display: block;
}

.q-row {
    display: flex;
    gap: 5px;
    margin-top: 2px;
}

.scale-q .q-row {
    margin-top: 1px;
}

.q-label {
    display: flex;
    justify-content: space-between;
    margin-top: 5px;
}

.q-label output {
    color: #fff;
    font-weight: 500;
}

.quantize .flat-range {
    margin-top: 2px;
    background: linear-gradient(#434343, #434343) center / 100% 2px no-repeat;
}

.flat-range::-webkit-slider-thumb {
    appearance: none;
    width: 12px;
    height: 12px;
    border-radius: 50%;
    background: #a0a0a0;
}

.keys {
    position: relative;
    width: 23px;
    overflow: hidden;
    background: #d7d7da;
}

.white-key {
    height: 22px;
    border-bottom: 1px solid #6d6d6d;
    color: #1c1c1c;
    font-size: 7px;
    font-weight: 600;
    text-align: right;
    padding-right: 2px;
}

.white-key.top {
    height: 17px;
    padding-top: 6px;
}

.black-key {
    position: absolute;
    left: 0;
    top: calc(3px + 13px * var(--row));
    width: 11px;
    height: 13px;
    background: #1d1d1d;
}

.black-key.sounding {
    background: #2c4572;
}

.automation {
    flex: 1;
    padding: 6px 13px 0 11px;
    border-top: 1px solid #1f1f1f;
    color: #c4c4c4;
}

.velocity-pick {
    margin-top: 10px;
    background: #444;
}

.velocity-pick select,
.velocity-pick svg {
    color: #86e36b;
}

.velocity-pick select {
    padding: 0 5px;
    text-align: center;
    text-align-last: center;
}

.roll .ruler {
    height: 14px;
    border-bottom: 1px solid #1f1f1f;
}

.roll .tick-row {
    height: 12px;
}

.roll-region {
    position: absolute;
    top: 0;
    bottom: 0;
    left: var(--origin);
    width: calc(var(--step) * 16);
    background: #cbfcda;
    color: #3b7d49;
    font-size: 7px;
    font-weight: 500;
    line-height: 10px;
}

.roll-region svg {
    position: absolute;
    top: 2px;
    left: 2px;
    width: 10px;
    height: 8px;
}

.roll-region span {
    position: absolute;
    left: 15px;
}

.roll-region .repeat {
    left: 89.3%;
    white-space: nowrap;
}

.roll .tick {
    background: #89898999;
}

.note-grid {
    height: 133px;
    border-bottom: 1px solid #151515;
    overflow: hidden;
}

.pitch-row {
    position: absolute;
    left: 0;
    right: 0;
    top: calc(3px + 13px * var(--row));
    height: 13px;
}

.pitch-row.sharp {
    background: #212121;
}

.pitch-row.edge {
    border-bottom: 1px solid #353535;
}

.bounds {
    position: absolute;
    top: 0;
    bottom: 0;
    left: var(--origin);
    width: calc(var(--step) * 16);
    border: 1px solid #3f8c4a;
    border-top: none;
    border-radius: 0 0 2px 2px;
    z-index: 1;
    box-shadow: 0 0 0 999px #0000002e;
}

.note {
    position: absolute;
    z-index: 2;
    top: 29px;
    left: calc(var(--origin) + var(--step) * var(--at));
    width: calc(var(--step) * 0.62);
    height: 13px;
    padding: 5px 1px;
    border: 1px solid #151515;
    background: #b4b052;
}

.note i {
    display: block;
    height: 2px;
    background: #ffffb08c;
}

.note.mid { background: #8bb04f; }
.note.low { background: #6cb44e; }
.note.soft { background: #5eb17b; }

.note.chosen {
    background: #cffff0;
}

.note.chosen i {
    background: #69a898;
}

.velocity-lane {
    height: 88px;
}

.velocity {
    position: absolute;
    left: calc(var(--origin) + var(--step) * var(--at));
    width: calc(var(--step) * 0.62);
    height: 1px;
    background: #68b356;
    color: #92f06c;
}

.velocity::before {
    content: "";
    position: absolute;
    top: -1px;
    left: -2px;
    width: 3px;
    height: 3px;
    border-radius: 1px;
    background: currentColor;
}

.velocity.chosen {
    background: #bbb;
    color: #fff;
}

.velocity.chosen::before {
    top: -2px;
    width: 5px;
    height: 5px;
    border-radius: 2px;
}

.roll .playhead {
    top: 13px;
    z-index: 3;
}

.roll .playhead svg {
    color: #e1f0e4;
    filter: drop-shadow(0 0 1px #666);
}
```

FILE: script.js
```js
function add(parent, className, vars, text) {
    const el = document.createElement('div');
    el.className = className;
    for (const name in vars) {
        el.style.setProperty(name, vars[name]);
    }
    if (text !== undefined) {
        el.textContent = text;
    }
    parent.appendChild(el);
    return el;
}

// 16th position counted from bar 3 -> "3 2 4"
function positionName(step) {
    const bar = step < 0 ? 2 : 3 + Math.floor(step / 16);
    const beat = Math.floor(((step + 16) % 16) / 4) + 1;
    const div = ((step + 16) % 4) + 1;
    // no room for the division after the last bar line
    if (step > 16) return bar + ' ' + beat;
    if (div > 1) return bar + ' ' + beat + ' ' + div;
    return beat > 1 ? bar + ' ' + beat : '' + bar;
}

function buildRuler(view, first, last, labelEvery) {
    const ruler = view.querySelector('.ruler');
    const ticks = view.querySelector('.tick-row');
    for (let s = first; s <= last; s++) {
        add(ticks, s % 4 === 0 ? 'tick beat' : 'tick', { '--at': s });
        if (s % labelEvery === 0) {
            let name = 'ruler-label';
            if (s >= 0 && s < 16) name += ' in-cycle';
            if (s % 16 === 0) name += ' bar';
            add(ruler, name, { '--at': s }, positionName(s));
        }
    }
}

function addWave(region, side, width, amp) {
    const ns = 'http://www.w3.org/2000/svg';
    const svg = document.createElementNS(ns, 'svg');
    svg.setAttribute('class', 'wave ' + side);
    svg.setAttribute('viewBox', '0 0 ' + width + ' 18');
    svg.setAttribute('preserveAspectRatio', 'none');
    const top = [];
    const bottom = [];
    for (let x = 0; x <= width; x++) {
        const a = amp(x);
        top.push(x + ',' + (9 - a).toFixed(2));
        bottom.unshift(x + ',' + (9 + a).toFixed(2));
    }
    const shape = document.createElementNS(ns, 'polygon');
    shape.setAttribute('points', top.concat(bottom).join(' '));
    svg.appendChild(shape);
    region.appendChild(svg);
}

function ripple(x) {
    return Math.abs(Math.sin(x * 12.9898) * 43758.5453) % 1;
}

function kickAmp(x) {
    let a = 0.4;
    if (x >= 2 && x < 5) a = 4 + (x - 2) * 1.5;
    else if (x >= 5 && x < 92) a = 8.3 + Math.sin(x / 9) * 0.4 - ripple(x) * 0.7;
    else if (x >= 92 && x < 168) a = 8.2 * (168 - x) / 76 - ripple(x) * 0.4;
    return Math.max(a, 0.4);
}

function congaAmp(x, scale) {
    let a = 0.7;
    if (x > 141) a += 4.5 * scale * Math.exp(-Math.pow((x - 141) / 34, 1.4)) * (0.4 + ripple(x) * 0.6);
    if (x > 141 && x < 270) a += ripple(x) * 0.4;
    if (x > 282) a += 1.8 * Math.exp(-(x - 282) / 14) * ripple(x) + 0.3 * ripple(x + 3);
    return a;
}

const timeline = document.getElementById('timeline');
const roll = document.getElementById('roll');

buildRuler(timeline, -1, 17, 1);
buildRuler(roll, -2, 18, 4);
for (let s = -1; s <= 17; s++) {
    timeline.prepend(add(timeline, 'gridline', { '--at': s }));
}

document.querySelectorAll('.region.kick').forEach(function (region) {
    addWave(region, 'left', 187, kickAmp);
    addWave(region, 'right', 187, kickAmp);
});

document.querySelectorAll('.region.congas').forEach(function (region) {
    const from = region.dataset.from * 47;
    const width = region.dataset.to * 47 - from;
    // the short region plays the tail of the loop
    const shift = from ? 232 : 0;
    addWave(region, 'left', width, function (x) { return congaAmp(x + shift, 1); });
    addWave(region, 'right', width, function (x) { return congaAmp(x + shift, 0.6); });
});

const hats = document.querySelector('.region.hats');
[2, 6, 10, 14].forEach(function (s) {
    add(hats, 'dash', { '--at': s, '--len': 1.55 });
});

// second value: offset of the velocity line from the top of its lane
const notes = [
    ['', 27], ['chosen', 56], ['mid', 32], ['low', 36],
    ['', 27], ['soft', 49], ['mid', 32], ['low', 35],
    ['', 26], ['soft', 52], ['mid', 32], ['low', 35],
    ['', 26], ['soft', 48], ['mid', 31], ['low', 35]
];
const bars = { '': '75%', chosen: '42%', mid: '68%', low: '62%', soft: '46%' };

const shaker = document.querySelector('.region.shaker');
const grid = document.querySelector('.note-grid');
const lane = document.querySelector('.velocity-lane');

for (let row = 0; row < 10; row++) {
    const sharp = [2, 4, 6, 9].includes(row);
    add(grid, 'pitch-row' + (sharp ? ' sharp' : '') + (row === 0 || row === 7 ? ' edge' : ''), { '--row': row });
}
for (let s = -2; s <= 18; s++) {
    add(grid, 'gridline', { '--at': s });
    add(lane, 'gridline', { '--at': s });
}

notes.forEach(function (note, i) {
    const at = i % 2 ? i + 0.115 : i;
    add(shaker, 'dash', { '--at': at, '--len': 0.61 });
    const box = add(grid, 'note ' + note[0], { '--at': at });
    box.appendChild(document.createElement('i')).style.width = bars[note[0]];
    add(lane, 'velocity ' + note[0], { '--at': at, 'top': note[1] + 'px' });
});

const keys = document.querySelector('.black-keys');
[-1, 2, 4, 6, 9].forEach(function (row) {
    add(keys, 'black-key' + (row === 2 ? ' sounding' : ''), { '--row': row });
});

document.querySelectorAll('.scale').forEach(function (scale) {
    [0, 3, 6, 9, 12, 15, 18, 21, 24, 30, 35, 40, 45, 50, 60].forEach(function (db) {
        add(scale, 'db', {}, db);
    });
});
```
